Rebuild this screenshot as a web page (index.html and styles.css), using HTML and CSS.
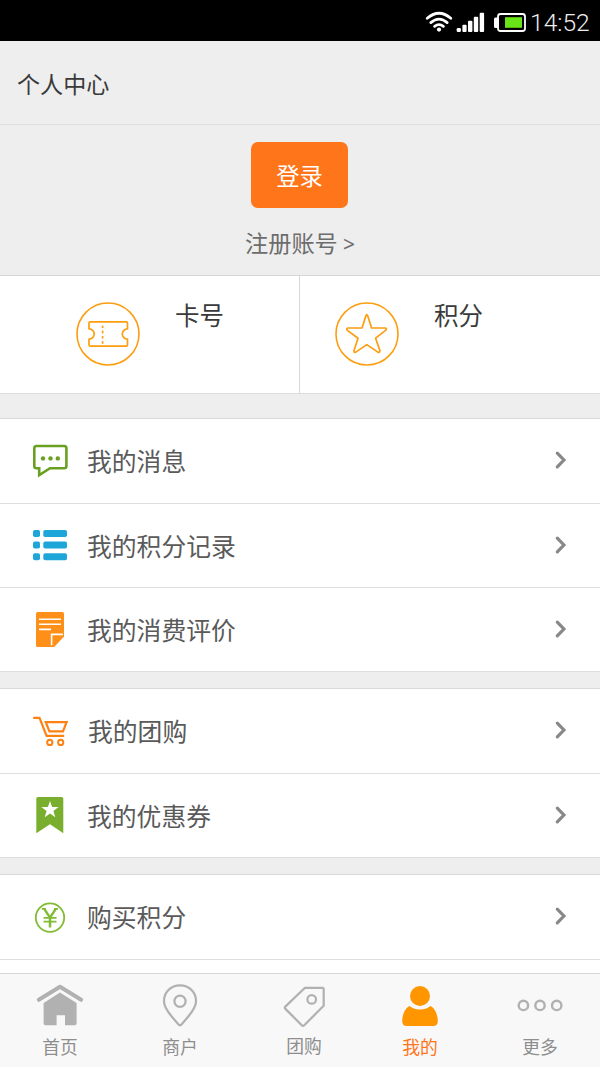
FILE: index.html
```html
<!DOCTYPE html>
<html lang="zh-CN">
<head>
<meta charset="utf-8">
<title>个人中心</title>
<link rel="stylesheet" href="styles.css">
</head>
<body>
<div class="app">
  <div class="status">
    <svg class="status-icons" viewBox="0 0 106 41">
      <g fill="none" stroke="#fff" stroke-width="2.7" stroke-linecap="round">
        <path d="M7.2 18.3Q19 8.2 30.8 18.3"/>
        <path d="M10.8 22.6Q19 15.6 27.2 22.6"/>
        <path d="M14.6 26.4Q19 22.8 23.4 26.4"/>
      </g>
      <circle cx="19" cy="29.6" r="2.1" fill="#fff"/>
      <g fill="#fff">
        <rect x="36.7" y="28" width="4.2" height="4" rx="1.3"/>
        <rect x="42.4" y="24.7" width="4.2" height="7.3" rx="1"/>
        <rect x="48" y="20.7" width="4.4" height="11.3" rx="1"/>
        <rect x="53.8" y="16.7" width="4.4" height="15.3" rx="1"/>
        <rect x="59.7" y="12.7" width="4.4" height="19.3" rx="1"/>
        <rect x="74" y="17.5" width="5" height="10.5" rx="1.5"/>
      </g>
      <rect x="78" y="14" width="27" height="17" rx="2.5" fill="none" stroke="#fff" stroke-width="1.8"/>
      <rect x="85" y="17.2" width="17" height="10.6" fill="#69e416"/>
    </svg>
    <span class="clock">14:52</span>
  </div>
  <header class="header">个人中心</header>
  <section class="account">
    <a class="login">登录</a>
    <a class="register">注册账号 <span class="gt">&gt;</span></a>
  </section>
  <section class="stats">
    <div class="stat stat-card">
      <svg class="stat-icon" viewBox="0 0 64 64" fill="none" stroke="#fd9d10">
        <circle cx="32" cy="32" r="31" stroke-width="1.6"/>
        <path stroke-width="1.7" stroke-linejoin="round" d="M14 19.8H50Q51.5 19.8 51.5 21.3V26.8A5 5 0 0 0 51.5 37.2V42.7Q51.5 44.2 50 44.2H14.5Q13 44.2 13 42.7V37.2A5 5 0 0 0 13 26.8V21.3Q13 19.8 14 19.8Z"/>
        <path stroke-width="1.8" stroke-linecap="round" stroke-dasharray="1 4.2" d="M26.6 24.3V41"/>
      </svg>
      <span class="stat-label">卡号</span>
    </div>
    <div class="stat stat-points">
      <svg class="stat-icon" viewBox="0 0 64 64" fill="none" stroke="#fd9d10">
        <circle cx="32" cy="32" r="31" stroke-width="1.6"/>
        <path stroke-width="1.7" stroke-linejoin="round" d="M31 13.5Q31.8 11.5 32.6 13.5L36.6 26H50.2Q52.6 26.4 50.6 28.4L40.6 36.2L44.9 48.6Q45 51 42.8 50.1L31.8 42.6L20.8 50.1Q18.8 51 19 48.6L23 36.2L12.4 28.4Q10.8 26.4 13 26H27Z"/>
      </svg>
      <span class="stat-label">积分</span>
    </div>
  </section>
  <section class="group">
    <a class="row row-first">
      <svg class="icon" viewBox="0 0 44 43">
        <path fill="none" stroke="#6aa022" stroke-width="2.6" d="M8.5 6H36.2Q38.4 6 38.4 8.2V26Q38.4 28.2 36.2 28.2H22L11.2 35.2V28.2H8.5Q6.3 28.2 6.3 26V8.2Q6.3 6 8.5 6Z"/>
        <g fill="#6aa022"><circle cx="15" cy="18.4" r="2.2"/><circle cx="22.5" cy="18.4" r="2.2"/><circle cx="29.8" cy="18.4" r="2.2"/></g>
      </svg>
      <span class="label">我的消息</span>
      <svg class="chevron" viewBox="0 0 14 20"><path d="M3.3 3.2L9.9 10L3.3 16.8"/></svg>
    </a>
    <a class="row">
      <svg class="icon" viewBox="0 0 44 43" fill="#1fa6d9">
        <rect x="5" y="6" width="7" height="7" rx="1.8"/><rect x="15.3" y="6" width="23.7" height="7" rx="1.8"/>
        <rect x="5" y="17.6" width="7" height="7" rx="1.8"/><rect x="15.3" y="17.6" width="23.7" height="7" rx="1.8"/>
        <rect x="5" y="29.2" width="7" height="7" rx="1.8"/><rect x="15.3" y="29.2" width="23.7" height="7" rx="1.8"/>
      </svg>
      <span class="label">我的积分记录</span>
      <svg class="chevron" viewBox="0 0 14 20"><path d="M3.3 3.2L9.9 10L3.3 16.8"/></svg>
    </a>
    <a class="row">
      <svg class="icon" viewBox="0 0 44 43">
        <path fill="#fe9019" d="M9.5 4H34.5Q36 4 36 5.5V28.6L26.2 39H9.5Q8 39 8 37.5V5.5Q8 4 9.5 4Z"/>
        <path fill="none" stroke="#fff" stroke-width="1.6" d="M11 11.3H33M11 16.3H33M11 21.4H23M23.6 37.2V26.4H35"/>
      </svg>
      <span class="label">我的消费评价</span>
      <svg class="chevron" viewBox="0 0 14 20"><path d="M3.3 3.2L9.9 10L3.3 16.8"/></svg>
    </a>
  </section>
  <section class="group group-near">
    <a class="row row-first">
      <svg class="icon" viewBox="0 0 44 43" fill="none" stroke="#fd8214">
        <path stroke-width="2.2" d="M5.2 7.9H11.5L18.6 25.9H36.2"/>
        <path stroke-width="2.2" d="M17.8 12.2H38.6L35 21.4H21.4Z"/>
        <circle cx="21.8" cy="32.4" r="2.6" stroke-width="2"/><circle cx="32.7" cy="32.4" r="2.6" stroke-width="2"/>
      </svg>
      <span class="label label-cart">我的团购</span>
      <svg class="chevron" viewBox="0 0 14 20"><path d="M3.3 3.2L9.9 10L3.3 16.8"/></svg>
    </a>
    <a class="row">
      <svg class="icon" viewBox="0 0 44 43">
        <path fill="#7aae2e" d="M10 3H33.6Q35.3 3 35.3 4.7V39.3L22 30.2L8.3 39.3V4.7Q8.3 3 10 3Z"/>
        <path fill="#fff" d="M22 7L24.1 13.1H30.6L25.4 17L27.3 23.2L22 19.5L16.7 23.2L18.6 17L13.4 13.1H19.9Z"/>
      </svg>
      <span class="label">我的优惠券</span>
      <svg class="chevron" viewBox="0 0 14 20"><path d="M3.3 3.2L9.9 10L3.3 16.8"/></svg>
    </a>
  </section>
  <section class="group group-near group-last">
    <a class="row row-first">
      <svg class="icon" viewBox="0 0 44 43" fill="none" stroke="#82bb35">
        <circle cx="22" cy="21.6" r="14.2" stroke-width="1.8"/>
        <path stroke-width="2.5" d="M16.2 12.9L22 21.6L27.8 12.9M22 21.1V31.6"/>
        <path stroke-width="1.6" d="M13.8 12.9H18M26 12.9H30M15.5 21.9H28.5M15.5 25.6H28.5"/>
      </svg>
      <span class="label">购买积分</span>
      <svg class="chevron" viewBox="0 0 14 20"><path d="M3.3 3.2L9.9 10L3.3 16.8"/></svg>
    </a>
  </section>
  <nav class="tabs">
    <a class="tab">
      <svg class="tab-icon" viewBox="0 0 60 50">
        <path fill="none" stroke="#b1b1b1" stroke-width="4" stroke-linecap="round" stroke-linejoin="round" d="M8.8 19.8L30 6.8L51.2 19.8"/>
        <path fill="#b1b1b1" d="M30 12.6L46.6 23V43.4Q46.6 45.2 44.8 45.2H35V35.2H26.6V45.2H15.4Q13.6 45.2 13.6 43.4V23Z"/>
      </svg>
      <span>首页</span>
    </a>
    <a class="tab">
      <svg class="tab-icon" viewBox="0 0 60 50" fill="none" stroke="#b1b1b1" stroke-width="2.2">
        <path stroke-linejoin="round" d="M30 5.4C20.5 5.4 14 12.6 14 21C14 28.5 21.5 36.5 28.8 44.7Q30 45.8 31.2 44.7C38.5 36.5 46 28.5 46 21C46 12.6 39.5 5.4 30 5.4Z"/>
        <circle cx="30" cy="21.2" r="5.6"/>
      </svg>
      <span>商户</span>
    </a>
    <a class="tab tab-deal">
      <svg class="tab-icon" viewBox="0 0 60 50" fill="none" stroke="#b1b1b1" stroke-width="2.2">
        <path stroke-linejoin="round" d="M31 7.8H48.5Q49.7 7.8 49.7 9V25.7L30 45.5Q29 46.4 28 45.5L11.2 28.6Q10.3 27.6 11.3 26.6Z"/>
        <circle cx="37.7" cy="19.4" r="4.3"/>
      </svg>
      <span>团购</span>
    </a>
    <a class="tab tab-active">
      <svg class="tab-icon" viewBox="0 0 60 50" fill="#ff9600">
        <circle cx="30" cy="16" r="10"/>
        <path d="M19.4 26C21.8 28 25 29.4 30 29.4S38.2 28 40.6 26C45.5 28.6 47.8 35.6 47.8 41.2Q47.8 46 43.3 46H16.7Q12.2 46 12.2 41.2C12.2 35.6 14.5 28.6 19.4 26Z"/>
      </svg>
      <span>我的</span>
    </a>
    <a class="tab">
      <svg class="tab-icon" viewBox="0 0 60 50" fill="none" stroke="#b1b1b1" stroke-width="2.4">
        <circle cx="13.4" cy="25.4" r="4.7"/><circle cx="30" cy="25.4" r="4.7"/><circle cx="46.7" cy="25.4" r="4.7"/>
      </svg>
      <span>更多</span>
    </a>
  </nav>
</div>
</body>
</html>
```
FILE: styles.css
```css
* { box-sizing: border-box; }

body {
  margin: 0;
  font-family: "Noto Sans CJK SC", "Noto Sans", sans-serif;
  color: #3a3a3a;
}

svg { display: block; flex: none; }

.app {
  width: 600px;
  height: 1067px;
  overflow: hidden;
  display: flex;
  flex-direction: column;
  background: #eee;
}

.status {
  height: 41px;
  flex: none;
  display: flex;
  align-items: center;
  padding-left: 420px;
  background: #000;
}
.status-icons { width: 106px; height: 41px; }
.clock {
  margin: 4px 0 0 4px;
  font: 300 24.6px/30px Roboto, sans-serif;
  color: #eee;
}

.header {
  height: 84px;
  flex: none;
  padding-left: 17px;
  font-size: 23.1px;
  line-height: 84px;
  border-bottom: 1px solid #ddd;
}

.account {
  height: 151px;
  flex: none;
  display: flex;
  flex-direction: column;
  align-items: center;
  padding-top: 17px;
  border-bottom: 1px solid #d6d6d6;
}
.login {
  width: 97px;
  height: 66px;
  margin-right: 1px;
  border-radius: 7px;
  background: #ff7519;
  color: #fff;
  font-size: 23.3px;
  line-height: 66px;
  text-align: center;
}
.register {
  margin-top: 17px;
  font-size: 23.2px;
  line-height: 34px;
  color: #6c6c6c;
}
.gt { font-family: "Noto Sans", sans-serif; font-size: 21px; }

.stats {
  height: 118px;
  flex: none;
  display: flex;
  background: #fff;
  border-bottom: 1px solid #ddd;
}
.stat { width: 300px; display: flex; padding-top: 25.5px; }
.stat-card { padding-left: 75.5px; border-right: 1px solid #d6d6d6; }
.stat-points { padding-left: 34.5px; }
.stat-icon { width: 64px; height: 64px; }
.stat-label { margin: -4.5px 0 0 35.5px; font-size: 24.5px; line-height: 36px; }

.group {
  flex: none;
  margin-top: 24px;
  background: #fff;
  border-top: 1px solid #d9d9d9;
}
.group-near { margin-top: 16px; }
.row {
  height: 84px;
  display: flex;
  align-items: center;
  padding: 0 32px 0 28px;
  border-bottom: 1px solid #ddd;
}
.row-first { height: 85px; }
.icon { width: 44px; height: 43px; }
.label {
  flex: 1;
  margin: 0 0 2px 15px;
  font-size: 24.8px;
  line-height: 36px;
  color: #5a5a5a;
}
.label-cart { margin-left: 16px; }
.chevron {
  width: 14px;
  height: 20px;
  margin-bottom: 2px;
  fill: none;
  stroke: #888;
  stroke-width: 3.2;
  stroke-linecap: round;
}
.group-last { flex: 1; }

.tabs {
  height: 94px;
  flex: none;
  display: flex;
  background: #f8f8f8;
  border-top: 1px solid #d8d8d8;
}
.tab {
  width: 120px;
  display: flex;
  flex-direction: column;
  align-items: center;
  padding-top: 6px;
  font-size: 17.8px;
  line-height: 26px;
  color: #8e8e8e;
}
.tab span { margin-top: 3px; }
.tab-icon { width: 60px; height: 50px; }
.tab-deal { padding-left: 8px; }
.tab-deal span { margin-top: 2px; }
.tab-active { color: #ff7519; }
```
